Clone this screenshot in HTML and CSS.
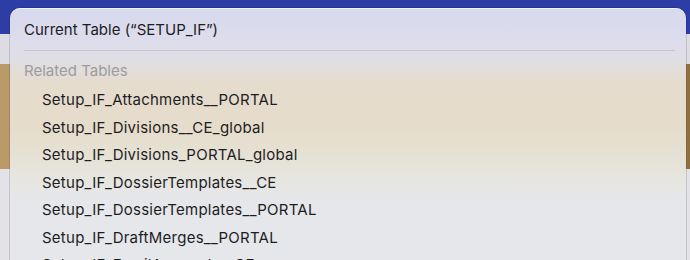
FILE: index.html
```html
<!DOCTYPE html>
<html lang="en">
<head>
<meta charset="utf-8">
<title>Related Tables Menu</title>
<link rel="stylesheet" href="styles.css">
</head>
<body>
<div class="backdrop">
  <div class="bg-bar"></div>
  <div class="bg-strip"></div>
  <div class="bg-tan"></div>
  <div class="bg-rest"></div>
</div>
<div class="menu">
  <div class="menu-item current">Current Table (“SETUP_IF”)</div>
  <div class="separator"></div>
  <div class="menu-header">Related Tables</div>
  <div class="menu-item sub">Setup_IF_Attachments__PORTAL</div>
  <div class="menu-item sub">Setup_IF_Divisions__CE_global</div>
  <div class="menu-item sub">Setup_IF_Divisions_PORTAL_global</div>
  <div class="menu-item sub">Setup_IF_DossierTemplates__CE</div>
  <div class="menu-item sub">Setup_IF_DossierTemplates__PORTAL</div>
  <div class="menu-item sub">Setup_IF_DraftMerges__PORTAL</div>
  <div class="menu-item sub">Setup_IF_EmailAccounts__CE</div>
</div>
</body>
</html>
```
FILE: styles.css
```css
html, body {
  margin: 0;
  padding: 0;
  width: 690px;
  height: 260px;
  overflow: hidden;
}
body {
  position: relative;
  font-family: Inter, "Liberation Sans", Arial, sans-serif;
  background: #e4e4e8;
}
.backdrop {
  display: flex;
  flex-direction: column;
  height: 260px;
}
.bg-bar {
  height: 34px;
  background: #2e3da6;
}
.bg-strip {
  height: 30px;
  background: #dcdce2;
}
.bg-tan {
  height: 105px;
  background: linear-gradient(to right, #b99a68 0, #b99a68 97%, #8d6d3c 100%);
}
.bg-rest {
  flex: 1;
  background: #e3e3e7;
}
.menu {
  position: absolute;
  left: 10px;
  top: 8px;
  width: 676px;
  height: 252px;
  overflow: hidden;
  box-sizing: border-box;
  border-radius: 10px 10px 0 0;
  padding: 7px 14px 0 14px;
  background: linear-gradient(to bottom,
    #d6d9ed 0px,
    #dcdcec 30px,
    #e0dee6 50px,
    #e5dcce 75px,
    #e6dccb 120px,
    #e6e0d2 140px,
    #e6e5df 170px,
    #e6e7ea 190px,
    #e6e7eb 252px);
  box-shadow: inset 0 1px 0 rgba(255,255,255,0.6), 0 0 0 0.5px rgba(0,0,0,0.25);
  display: flex;
  flex-direction: column;
}
.menu-item {
  font-size: 15px;
  color: #1d1d1f;
  height: 27.5px;
  line-height: 27.5px;
  flex: none;
  white-space: nowrap;
}
.current {
  height: 30px;
  line-height: 30px;
}
.separator {
  flex: none;
  height: 1px;
  background: #c6c6cb;
  margin: 5px 0 7px 0;
  width: 651px;
}
.menu-header {
  flex: none;
  font-size: 15px;
  color: #9c9ca0;
  height: 28px;
  line-height: 26px;
}
.sub {
  padding-left: 18px;
  letter-spacing: 0.25px;
}
```
